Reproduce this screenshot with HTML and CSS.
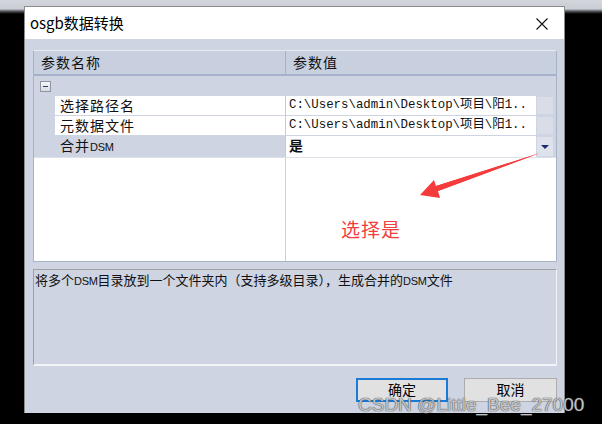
FILE: index.html
```html
<!DOCTYPE html>
<html lang="zh-CN">
<head>
    <meta charset="UTF-8">
    <title>osgb数据转换</title>
    <link rel="stylesheet" href="styles.css">
</head>
<body>
    <div class="desk-top"></div>

    <div class="dialog">
        <div class="titlebar">
            <span class="title">osgb数据转换</span>
            <svg class="close" width="12" height="12" viewBox="0 0 12 12">
                <path d="M0.5 0.5 L11.5 11.5 M11.5 0.5 L0.5 11.5" stroke="#111" stroke-width="1.1" fill="none"/>
            </svg>
        </div>

        <div class="dialog-body">
            <div class="prop-grid">
                <div class="grid-head">
                    <div class="head-cell">参数名称</div>
                    <div class="head-cell">参数值</div>
                </div>
                <div class="category">
                    <span class="minus-box"><span></span></span>
                </div>
                <div class="grid-row">
                    <div class="gutter"></div>
                    <div class="name">选择路径名</div>
                    <div class="value mono">C:\Users\admin\Desktop\项目\阳1..</div>
                    <div class="btn-cell"></div>
                </div>
                <div class="grid-row">
                    <div class="gutter"></div>
                    <div class="name">元数据文件</div>
                    <div class="value mono">C:\Users\admin\Desktop\项目\阳1..</div>
                    <div class="btn-cell"></div>
                </div>
                <div class="grid-row selected">
                    <div class="gutter"></div>
                    <div class="name">合并<span class="narrow">DSM</span></div>
                    <div class="value bold">是</div>
                    <div class="btn-cell drop"><span class="tri"></span></div>
                </div>
                <div class="grid-empty">
                    <div class="empty-left"></div>
                    <div class="empty-right"></div>
                </div>
            </div>

            <div class="desc">将多个<span class="narrow">DSM</span>目录放到一个文件夹内（支持多级目录），生成合并的<span class="narrow">DSM</span>文件</div>

            <div class="buttons">
                <button class="btn default">确定</button>
                <button class="btn">取消</button>
            </div>
        </div>
    </div>

    <!-- annotation drawn on the screenshot -->
    <svg class="arrow" width="602" height="424" viewBox="0 0 602 424">
        <path d="M540 153 L436 186 L434 180 L420 195 L440 198 L438 191 Z" fill="#f53b3b"/>
        <path d="M540 153 L436 186 L438 191 Z" fill="#f53b3b"/>
    </svg>
    <div class="note">选择是</div>

    <div class="watermark">CSDN @Little_Bee_27000</div>
</body>
</html>
```

FILE: styles.css
```css
body{
    margin: 0;
    width: 602px;
    height: 424px;
    overflow: hidden;
    background-color: #000;
    position: relative;
    font-family: "Noto Sans CJK SC", "Liberation Sans", sans-serif;
}
.desk-top{
    height: 14px;
    background: linear-gradient(#d3d6dc 0, #c9ccd3 9px, #8f939a 10px, #3a3a3a 12px, #000 14px);
}
.dialog{
    position: absolute;
    left: 24px;
    top: 6px;
    width: 539px;
    height: 406px;
    border: 1px solid #8c8c8c;
    border-bottom: none;
    background-color: #ced4e1;
    display: flex;
    flex-direction: column;
}
.titlebar{
    height: 32px;
    background-color: #fff;
    display: flex;
    align-items: center;
    justify-content: space-between;
    padding: 0 16px 0 5px;
}
.title{
    font-size: 15px;
    color: #000;
    position: relative;
    top: -1px;
}
.close{
    position: relative;
    top: 1px;
}
.dialog-body{
    flex: 1;
    padding: 11px 7px 0 8px;
    display: flex;
    flex-direction: column;
}
.prop-grid{
    height: 210px;
    border: 1px solid #a9b3c6;
    border-top-color: #e6eaf2;
    background-color: #ced4e1;
    display: flex;
    flex-direction: column;
    font-size: 14px;
    color: #111;
}
.grid-head{
    display: grid;
    grid-template-columns: 252px 1fr;
    height: 23px;
    background-color: #c8d0e0;
    border-bottom: 2px solid #a6b1ca;
}
.head-cell{
    padding-left: 7px;
    line-height: 23px;
    letter-spacing: 1px;
}
.head-cell:first-child{
    border-right: 1px solid #a6b1ca;
}
.category{
    height: 20px;
    display: flex;
    align-items: center;
    padding-left: 6px;
}
.minus-box{
    width: 9px;
    height: 9px;
    border: 1px solid #8f96a3;
    background: linear-gradient(#f4f5f7, #d7dbe2);
    display: flex;
    align-items: center;
    justify-content: center;
}
.minus-box span{
    width: 5px;
    height: 1px;
    background-color: #2a3c6a;
}
.grid-row{
    display: grid;
    grid-template-columns: 21px 231px 250px 1fr;
    height: 19px;
    margin-bottom: 1px;
    line-height: 19px;
}
.name{
    background-color: #fff;
    padding-left: 5px;
    letter-spacing: 1px;
    border-right: 1px solid #c2cad9;
}
.selected .name{
    background-color: #ced4e1;
}
.value{
    background-color: #fff;
    padding-left: 3px;
    white-space: nowrap;
    overflow: hidden;
}
.mono{
    font-family: "Liberation Mono", "Noto Sans CJK SC", monospace;
    font-size: 12.4px;
}
.bold{
    font-weight: bold;
    font-size: 14px;
}
.narrow{
    font-family: "Liberation Sans Narrow", "Liberation Sans", sans-serif;
    font-size: 11px;
    letter-spacing: -0.3px;
}
.btn-cell{
    margin: 1px 3px 1px 1px;
    background-color: #d8dde8;
}
.drop{
    display: flex;
    align-items: center;
    justify-content: center;
    background-color: #dde2ec;
}
.tri{
    width: 0;
    height: 0;
    border-left: 4px solid transparent;
    border-right: 4px solid transparent;
    border-top: 4px solid #1c2a6e;
}
.grid-empty{
    flex: 1;
    display: grid;
    grid-template-columns: 252px 1fr;
    background-color: #fff;
    margin-top: 1px;
    border-top: 1px solid #dde1ea;
}
.empty-left{
    border-right: 1px solid #c9cfdb;
}
.desc{
    margin-top: 7px;
    height: 94px;
    border: 1px solid #a0a0a0;
    border-right-color: #f2f4f8;
    border-bottom-color: #f2f4f8;
    border-bottom-width: 2px;
    font-size: 13px;
    line-height: 20px;
    color: #111;
    padding: 0 0 0 1px;
}
.buttons{
    display: flex;
    justify-content: flex-end;
    gap: 16px;
    margin-top: 12px;
}
.btn{
    height: 24px;
    background-color: #e1e1e1;
    border: 1px solid #adadad;
    font-family: "Noto Sans CJK SC", sans-serif;
    font-size: 14px;
    color: #000;
    padding: 0 0 3px;
    line-height: 16px;
    width: 93px;
}
.btn.default{
    border: 2px solid #1a7bd6;
    width: 92px;
}
.arrow{
    position: absolute;
    left: 0;
    top: 0;
}
.note{
    position: absolute;
    left: 341px;
    top: 215px;
    font-size: 19px;
    color: #f23e3e;
    letter-spacing: 1px;
}
.watermark{
    position: absolute;
    left: 358px;
    top: 394px;
    font-family: "Liberation Sans", sans-serif;
    font-size: 19px;
    color: rgba(235, 238, 242, 0.75);
    text-shadow: 0 0 1px #444, 0 0 1px #444;
}
```
